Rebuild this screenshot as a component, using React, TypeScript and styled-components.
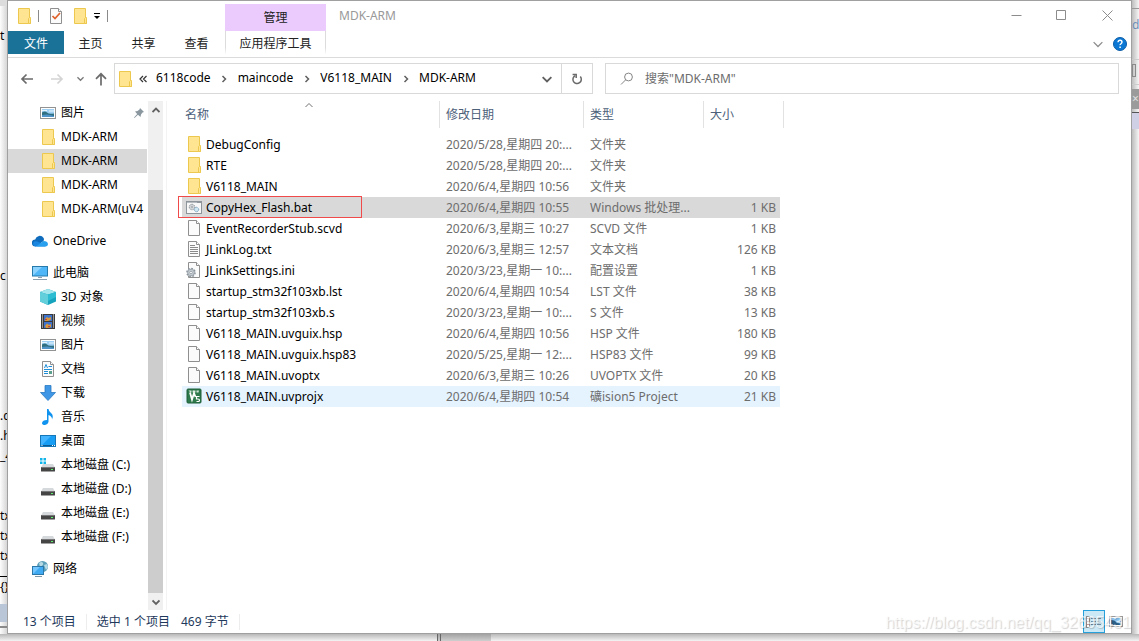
import React from 'react';
import styled, { createGlobalStyle, css } from 'styled-components';

const GlobalStyle = createGlobalStyle`
  * { box-sizing: border-box; }
  body {
    margin: 0;
    background: #fff;
    color: #000;
    font: 12px/20px "Noto Sans", "Noto Sans CJK SC", sans-serif;
  }
  button, input {
    font: inherit;
    color: inherit;
    margin: 0;
    padding: 0;
    border: 0;
    background: none;
  }
  svg { display: block; flex: none; }
`;

/* ---------- Desktop behind the window ---------- */

const Desktop = styled.div`
  display: flex;
  flex-direction: column;
  min-height: 100vh;
`;

const DesktopRow = styled.div`
  display: flex;
  flex: 1;
`;

const LeftEdge = styled.div`
  flex: none;
  width: 7px;
  overflow: hidden;
  display: flex;
  flex-direction: column;
  background: linear-gradient(90deg, #fdfdfd, #d6d6d6);
`;

const Peek = styled.span<{ $gap?: number; $chip?: boolean }>`
  flex: none;
  height: 20px;
  margin-top: ${(p) => p.$gap ?? 0}px;
  white-space: nowrap;
  ${(p) =>
    p.$chip &&
    css`
      color: #e0e0e0;
      background: #9b9b9b;
    `}
`;

const PeekBar = styled.span<{ $gap: number; $height: number; $color: string; $outline?: boolean }>`
  flex: none;
  height: ${(p) => p.$height}px;
  margin-top: ${(p) => p.$gap}px;
  margin-right: ${(p) => (p.$outline ? 3 : 0)}px;
  background: ${(p) => (p.$outline ? 'transparent' : p.$color)};
  border: ${(p) => (p.$outline ? `1px solid ${p.$color}` : '0')};
`;

const RightEdge = styled(LeftEdge)`
  background: linear-gradient(90deg, #bdbdbd, #f6f6f6);
  color: #6f8fb8;
`;

const BottomEdge = styled.div`
  flex: none;
  height: 7px;
  display: flex;
  background: linear-gradient(#b8b8b8, #f4f4f4);
`;

const BottomPane = styled.div`
  width: 54px;
  margin-left: 437px;
  border-left: 4px double #666;
  background: linear-gradient(#a2a2a2, #cfcfcf);
`;

/* ---------- Window frame ---------- */

const Window = styled.main`
  flex: 1;
  min-width: 0;
  display: flex;
  flex-direction: column;
  background: #fff;
  border: 1px solid #a0a0a0;
`;

const Ribbon = styled.header`
  display: flex;
  flex-direction: column;
  border-bottom: 1px solid #dadbdc;
`;

const TitleBar = styled.div`
  display: flex;
  height: 30px;
`;

const QuickAccess = styled.div`
  display: flex;
  align-items: center;
  gap: 6px;
  width: 217px;
  padding-left: 8px;
`;

const QuickDivider = styled.span`
  width: 1px;
  height: 12px;
  background: #8a8a8a;
`;

const IconButton = styled.button<{ $width?: number }>`
  display: flex;
  align-items: center;
  justify-content: center;
  width: ${(p) => p.$width ?? 16}px;
  min-height: 16px;
`;

const ContextGroup = styled.div`
  width: 101px;
  margin-top: 3px;
  padding-top: 4px;
  text-align: center;
  color: #222;
  background: #ebcbfd;
`;

const WindowTitle = styled.h1`
  margin: 0;
  flex: 1;
  padding: 5px 13px;
  font-size: 12px;
  font-weight: 400;
  color: #999;
`;

const WindowControls = styled.div`
  display: flex;
  padding-bottom: 2px;
`;

const TabRow = styled.nav`
  display: flex;
  height: 26px;
`;

const Tab = styled.button<{ $variant?: 'file' | 'context' }>`
  width: 53px;
  height: 23px;
  padding-top: 2px;
  color: #222;
  ${(p) =>
    p.$variant === 'file' &&
    css`
      width: 56px;
      color: #fff;
      background: #1b7299;
    `}
  ${(p) =>
    p.$variant === 'context' &&
    css`
      width: 101px;
      margin-left: 2px;
      border: solid;
      border-width: 0 1px;
      border-image: linear-gradient(#dcdcdc, #dcdcdc 70%, #fff) 1;
    `}
`;

const RibbonTools = styled.div`
  display: flex;
  align-items: center;
  gap: 7px;
  margin-left: auto;
  padding-right: 4px;
`;

/* ---------- Address row ---------- */

const AddressRow = styled.div`
  display: flex;
  padding: 5px 12px 7px 0;
`;

const NavButtons = styled.div`
  display: flex;
  align-items: center;
  width: 106px;
  padding-left: 4px;
`;

const AddressBox = styled.div`
  flex: 475 1 0;
  display: flex;
  align-items: center;
  height: 31px;
  padding-left: 2px;
  border: 1px solid #d9d9d9;
`;

const Crumbs = styled.ol`
  display: flex;
  align-items: center;
  flex: 1;
  margin: 0;
  padding: 0 0 2px 6px;
  list-style: none;
`;

const Crumb = styled.li`
  display: flex;
  align-items: center;
  white-space: nowrap;
`;

const CrumbLink = styled.a`
  color: #000;
  text-decoration: none;
`;

const CrumbArrow = styled.span`
  display: flex;
  justify-content: center;
  width: 27px;
  padding-top: 2px;
`;

const CrumbOverflow = styled(CrumbArrow)`
  justify-content: flex-start;
  width: 17px;
`;

const RefreshButton = styled(IconButton)`
  width: 31px;
  height: 29px;
  border-left: 1px solid #d9d9d9;
`;

const SearchBox = styled.label`
  flex: 498 1 0;
  display: flex;
  align-items: center;
  gap: 11px;
  height: 31px;
  margin-left: 12px;
  padding-left: 14px;
  border: 1px solid #d9d9d9;
`;

const SearchInput = styled.input`
  flex: 1;
  outline: none;
  &::placeholder { color: #6d6d6d; opacity: 1; }
`;

/* ---------- Body ---------- */

const Body = styled.div`
  flex: 1;
  display: flex;
`;

const Sidebar = styled.nav`
  flex: none;
  width: 139px;
  overflow: hidden;
`;

const TreeLink = styled.a<{ $root?: boolean; $selected?: boolean }>`
  display: flex;
  align-items: center;
  gap: 5px;
  height: 24px;
  margin-top: ${(p) => (p.$root ? 8 : 0)}px;
  padding-left: ${(p) => (p.$root ? 24 : 32)}px;
  color: #000;
  text-decoration: none;
  white-space: nowrap;
  background: ${(p) => (p.$selected ? '#d9d9d9' : 'transparent')};
`;

const PinSlot = styled.span`
  margin-left: auto;
  padding-right: 3px;
`;

const ScrollBar = styled.div`
  flex: none;
  display: flex;
  flex-direction: column;
  width: 15px;
  margin-left: 1px;
  background: #f0f0f0;
`;

const ScrollButton = styled.button`
  display: flex;
  align-items: center;
  justify-content: center;
  height: 17px;
`;

const ScrollThumb = styled.div`
  flex: 1;
  margin-top: 72px;
  background: #cdcdcd;
`;

const Content = styled.section`
  flex: 1;
  min-width: 0;
  margin-left: 3px;
  padding-left: 15px;
  border-left: 1px solid #f3f3f3;
`;

const FileTable = styled.table`
  width: 602px;
  table-layout: fixed;
  border-collapse: collapse;
`;

const HeadCell = styled.th`
  position: relative;
  padding: 0 0 6px;
  font-weight: 400;
  text-align: left;
`;

const HeadLabel = styled.div<{ $indent?: number }>`
  height: 27px;
  padding: 4px 0 0 ${(p) => p.$indent ?? 6}px;
  border-right: 1px solid #e2e2e2;
  color: #4c607a;
`;

const SortMark = styled.span`
  position: absolute;
  top: 0;
  left: 0;
  right: 4px;
  display: flex;
  justify-content: center;
`;

const FileRow = styled.tr<{ $state?: 'selected' | 'hover' }>`
  td {
    background: ${(p) =>
      p.$state === 'selected' ? '#d9d9d9' : p.$state === 'hover' ? '#e5f3ff' : 'transparent'};
  }
`;

const Cell = styled.td<{ $align?: 'right' }>`
  height: 21px;
  padding: ${(p) => (p.$align ? '0 4px 0 0' : '0 0 0 6px')};
  line-height: 21px;
  text-align: ${(p) => p.$align ?? 'left'};
  white-space: nowrap;
  color: #6d6d6d;
`;

const NameCell = styled(Cell)`
  position: relative;
  padding-left: 4px;
  color: #000;
`;

const FileName = styled.span`
  display: flex;
  align-items: center;
  gap: 4px;
  svg { margin-bottom: 1px; }
`;

const Highlight = styled.span`
  position: absolute;
  top: -1px;
  left: -4px;
  width: 184px;
  height: 22px;
  border: 1px solid #f04a4a;
`;

const StatusBar = styled.footer`
  position: relative;
  display: flex;
  align-items: center;
  height: 23px;
  padding-left: 15px;
  color: #1e395b;
`;

const StatusText = styled.span<{ $divider?: boolean }>`
  padding-right: 10px;
  margin-right: ${(p) => (p.$divider ? 10 : 0)}px;
  line-height: 16px;
  border-right: 1px solid ${(p) => (p.$divider ? '#ededed' : 'transparent')};
`;

const ViewButtons = styled.div`
  display: flex;
  align-self: stretch;
  margin-left: auto;
  padding-right: 4px;
`;

const ViewButton = styled.button<{ $active?: boolean }>`
  display: flex;
  align-items: center;
  justify-content: center;
  width: 22px;
  border: 1px solid ${(p) => (p.$active ? '#26a0da' : 'transparent')};
  background: ${(p) => (p.$active ? '#cbe8f6' : 'transparent')};
`;

const Watermark = styled.span`
  position: absolute;
  right: 0;
  top: 3px;
  font: 16px/20px "Liberation Sans", sans-serif;
  color: rgba(255, 255, 255, 0.7);
  text-shadow: 1px 1px 1px rgba(0, 0, 0, 0.18);
  pointer-events: none;
`;

/* ---------- Icons ---------- */

type ChevronProps = { dir: 'up' | 'down' | 'right'; size?: number; color?: string; weight?: number };

const Chevron = ({ dir, size = 8, color = '#606060', weight = 1.5 }: ChevronProps) => (
  <svg width={size} height={size} viewBox="0 0 8 8" fill="none" stroke={color} strokeWidth={weight}>
    <path d={dir === 'up' ? 'M.5 6 4 2.5 7.5 6' : dir === 'down' ? 'M.5 2.5 4 6 7.5 2.5' : 'M2.5 1 5.5 4 2.5 7'} />
  </svg>
);

const FolderIcon = () => (
  <svg width="16" height="16" viewBox="0 0 16 16">
    <path d="M2.5.5h11v9h1v6h-12z" fill="#ffe591" stroke="#ecc94e" />
    <path d="M12.5 15.5v-5l1-1 1 1v5z" fill="#ffe591" stroke="#ecc94e" />
  </svg>
);

const PageShape = () => (
  <>
    <path d="M2.5.5h8l3 3v12h-11z" fill="#fbfbfb" stroke="#8f8f8f" />
    <path d="M10.5.5v3h3" fill="#fff" stroke="#8f8f8f" />
  </>
);

const FileIcon = () => (
  <svg width="16" height="16" viewBox="0 0 16 16"><PageShape /></svg>
);

const TextFileIcon = () => (
  <svg width="16" height="16" viewBox="0 0 16 16">
    <PageShape />
    <path d="M4 4.5h5M4 6.5h8M4 8.5h8M4 10.5h8M4 12.5h8" stroke="#8a8a8a" />
  </svg>
);

const IniIcon = () => (
  <svg width="16" height="16" viewBox="0 0 16 16">
    <PageShape />
    <circle cx="5" cy="10.5" r="4" fill="#c9d0d6" stroke="#8b959d" strokeWidth="1.6" strokeDasharray="1.7 1.4" />
    <circle cx="5" cy="10.5" r="3.2" fill="#c9d0d6" stroke="#9aa3aa" strokeWidth=".8" />
    <circle cx="5" cy="10.5" r="1.3" fill="#fff" stroke="#8b959d" strokeWidth=".8" />
  </svg>
);

const BatIcon = () => (
  <svg width="16" height="16" viewBox="0 0 16 16">
    <rect x=".5" y="2.5" width="15" height="12" fill="#f8f8f8" stroke="#8d949a" />
    <path d="M1 3.5h14" stroke="#b6bcc2" />
    <path d="M11.5 3.5h3" stroke="#6a7075" strokeDasharray="1 1" />
    <circle cx="6" cy="8" r="2.7" fill="#e3e6e8" stroke="#7d848a" strokeDasharray="1.2 .6" />
    <circle cx="6" cy="8" r="1" fill="#fff" stroke="#7d848a" strokeWidth=".7" />
    <circle cx="10.5" cy="10.5" r="2.2" fill="#cfe6f3" stroke="#6f9ab3" strokeDasharray="1 .5" />
  </svg>
);

const KeilIcon = () => (
  <svg width="16" height="16" viewBox="0 0 16 16">
    <rect x="1" y="1" width="14" height="14" rx="1" fill="#2f7a4d" stroke="#1f5f39" />
    <path d="M2.500 2.500h3v2h-1zM6.500 2.500h3v2h-3zM10.500 2.500h2.500l-.5 2h-2z" fill="#cfe5d6" />
    <path d="M4 4.500 6 11.500 8 5 9.500 9" fill="none" stroke="#fff" strokeWidth="1.800" />
    <path d="M13.500 8.500h-3v2.500h1.500q1.500 0 1.500 1.300t-1.500 1.200h-1.500" fill="none" stroke="#fff" strokeWidth="1.200" />
  </svg>
);

const PicturesIcon = () => (
  <svg width="16" height="16" viewBox="0 0 16 16">
    <rect x=".5" y="2.500" width="15" height="11" fill="#fff" stroke="#929292" />
    <rect x="2" y="4" width="12" height="8" fill="#9fd0f3" />
    <path d="M2 7.500q3-2 5 0t7 1v3.500H2z" fill="#2f6f80" />
    <path d="M2 5.500h5M9 6h5" stroke="#e6f4fd" />
    <path d="M2 10q6-1.500 12 1v1H2z" fill="#4f93c8" />
  </svg>
);

const OneDriveIcon = () => (
  <svg width="16" height="16" viewBox="0 0 16 16">
    <path d="M3.500 13.500a3.500 3.500 0 0 1-.3-7A4.600 4.600 0 0 1 11.600 5q1 2-.6 3.500z" fill="#0f6cbd" />
    <path d="M3.500 13.500Q1 13 1 10.700q.3-3 4-2.200l2.500 1L14 13.500z" fill="#1a86e0" />
    <path d="M4 13.500 11.500 8q4 0 4.500 3-.1 2.500-3 2.500z" fill="#28a0ee" />
  </svg>
);

const ComputerIcon = () => (
  <svg width="16" height="16" viewBox="0 0 16 16">
    <rect x=".5" y="1.500" width="15" height="9.500" fill="#4fb6f7" stroke="#2579ab" />
    <path d="M1 10.500V2h9z" fill="#8bd2ff" />
    <path d="M6 12.500h4M1 14.500h14" stroke="#8aa0b0" />
  </svg>
);

const CubeIcon = () => (
  <svg width="16" height="16" viewBox="0 0 16 16">
    <path d="M8 0 16 3v9.500L8 16 0 12.500V3z" fill="#16a3bd" />
    <path d="M8 0 16 3 8 5.500 0 3z" fill="#a5e6ec" />
    <path d="M0 3 8 5.500V16L0 12.500z" fill="#62cfdb" />
    <path d="M8 5.500 16 3v5L8 12z" fill="#2dbdd2" />
  </svg>
);

const VideoIcon = () => (
  <svg width="16" height="16" viewBox="0 0 16 16">
    <path d="M1 1h14v15H1z" fill="#3b3b3b" />
    <path d="M2.500 1.500v14M13.500 1.500v14" stroke="#f2f2f2" strokeDasharray="1 1" />
    <path d="M4 2h8v6H4zM4 9h8v6H4z" fill="#3f74cc" />
    <path d="M5 6 7 4l1.500 1L11 4v2.500L8 8H5zM5 13l2-2.500L9 12l2-1v3l-3 1H6z" fill="#d9963a" />
    <path d="M5 6.500h2M8 13.500h2" stroke="#c33f3a" />
  </svg>
);

const DocumentsIcon = () => (
  <svg width="16" height="16" viewBox="0 0 16 16">
    <PageShape />
    <path d="M4.500 7 6 3.500 7.500 7M8.500 5.500H12M4 8.500h8M4 10.500h4M4 12.500h4" fill="none" stroke="#1f8ed8" />
    <rect x="9" y="10" width="3" height="3" fill="#5aa08c" />
  </svg>
);

const DownloadsIcon = () => (
  <svg width="16" height="16" viewBox="0 0 16 16">
    <path d="M5 .500h6v7h4.500L8 15.500.500 7.500H5z" fill="#3f97e6" stroke="#2a78c2" strokeWidth=".8" />
  </svg>
);

const MusicIcon = () => (
  <svg width="16" height="16" viewBox="0 0 16 16">
    <path d="M7 0h1.500q.3 2.500 2.500 4 3 2.500 1 6.500.3-3-3.500-4.500V13q-.5 2.500-3.500 3-3 0-3-2 .5-3 5-3z" fill="#0f93ef" />
  </svg>
);

const DesktopIcon = () => (
  <svg width="16" height="16" viewBox="0 0 16 16">
    <rect x=".5" y="2.500" width="15" height="11" fill="#189df5" stroke="#1577b8" />
    <path d="M1 13V3h10z" fill="#43b4ff" />
    <path d="M1 12.500h14" stroke="#0b5a92" />
    <path d="M1.500 12.500h1M12 12.500h1M14 12.500h1" stroke="#fff" />
  </svg>
);

const DriveIcon = ({ system }: { system?: boolean }) => (
  <svg width="16" height="16" viewBox="0 0 16 16">
    <path d="M3 7h10l2 3.500H1z" fill="#d6d9db" />
    <rect x="1" y="10" width="14" height="4.500" rx=".5" fill="#454545" />
    <path d="M1.500 10.500h13" stroke="#777" />
    <rect x="11" y="12" width="2" height="1" fill="#5df06c" />
    {system && <path d="M0 1h2.500v2.500H0zM3.500 1H6v2.500H3.500zM0 4.500h2.500V7H0zM3.500 4.500H6V7H3.500z" fill="#12b5ea" />}
  </svg>
);

const NetworkIcon = () => (
  <svg width="16" height="16" viewBox="0 0 16 16">
    <circle cx="10.500" cy="5.500" r="5.500" fill="#5c9fb8" />
    <path d="M7 2q3-2 4 0T8 6zM12 4l3-1 1 3-2 3z" fill="#b7dbe6" />
    <rect x=".5" y="5.500" width="11" height="8" fill="#3fa9f2" stroke="#2b78a8" />
    <path d="M1 13V6h7z" fill="#74c6ff" />
    <path d="M3 15.500h7" stroke="#7c98a8" />
  </svg>
);

const PinIcon = () => (
  <svg width="10" height="10" viewBox="0 0 10 10">
    <path d="M6 0 10 4 8.500 4.500 7 6.500 6.500 9 4 6.800.500 10 0 9.500 3.200 6 1 3.500 3.500 3 5.500 1.500z" fill="#8a979f" />
  </svg>
);

const CheckPageIcon = () => (
  <svg width="16" height="16" viewBox="0 0 16 16">
    <PageShape />
    <path d="m4.500 8 2.500 2.500L12 5" fill="none" stroke="#e0622c" strokeWidth="1.700" />
  </svg>
);

const CustomizeIcon = () => (
  <svg width="8" height="8" viewBox="0 0 8 8">
    <path d="M1 1.500h6" stroke="#000" />
    <path d="M1 4h6L4 7z" fill="#000" />
  </svg>
);

const Arrow = ({ kind, color }: { kind: 'left' | 'right' | 'up'; color: string }) => (
  <svg width="14" height="14" viewBox="0 0 14 14" fill="none" stroke={color} strokeWidth="1.700">
    <path
      d={
        kind === 'left'
          ? 'M13 7H2M6.500 2.500 2 7l4.500 4.500'
          : kind === 'right'
            ? 'M1 7h11M7.500 2.500 12 7l-4.500 4.500'
            : 'M7 13.500V2M2 6.800 7 1.800l5 5'
      }
    />
  </svg>
);

const WindowIcon = ({ kind }: { kind: 'min' | 'max' | 'close' }) => (
  <svg width="11" height="11" viewBox="0 0 11 11" fill="none" stroke="#8c8c8c">
    <path
      d={
        kind === 'min'
          ? 'M.500 5.500h10'
          : kind === 'max'
            ? 'M.500.500h9v9H.500z'
            : 'M.500.500l10 10M10.500.500l-10 10'
      }
    />
  </svg>
);

const HelpIcon = () => (
  <svg width="14" height="14" viewBox="0 0 14 14">
    <circle cx="7" cy="7" r="6.500" fill="#0d78d4" stroke="#0a5ca6" />
    <path d="M5 5.300q.2-2 2.100-2T9 5.100Q9 6 8 6.700t-.9 1.500" fill="none" stroke="#fff" strokeWidth="1.400" />
    <path d="M7.100 9.500v1.500" stroke="#fff" strokeWidth="1.500" />
  </svg>
);

const RefreshIcon = () => (
  <svg width="12" height="12" viewBox="0 0 12 12" fill="none" stroke="#6a6a6a" strokeWidth="1.500">
    <path d="M9.300 3.600A4.200 4.200 0 1 1 4.200 2.600" />
    <path d="M5.200 5V1.500H1.600" />
  </svg>
);

const SearchIcon = () => (
  <svg width="14" height="14" viewBox="0 0 14 14" fill="none" stroke="#858585">
    <circle cx="8.500" cy="5" r="3.900" />
    <path d="M5.700 7.800 1 12.500" />
  </svg>
);

const DoubleLeft = () => (
  <svg width="8" height="8" viewBox="0 0 8 8" fill="none" stroke="#333" strokeWidth="1.200">
    <path d="M4 1 1 4l3 3M7.500 1l-3 3 3 3" />
  </svg>
);

const DetailsViewIcon = () => (
  <svg width="16" height="12" viewBox="0 0 16 12">
    <rect x=".5" y=".5" width="3" height="11" fill="#fff" stroke="#8d8d8d" />
    <path d="M2 2v9" stroke="#a23c34" strokeDasharray="1 2" />
    <path d="M5 2.500h5M11 2.500h4M5 5.500h5M11 5.500h4M5 8.500h5M11 8.500h4" stroke="#6f8ba0" />
  </svg>
);

const LargeViewIcon = () => (
  <svg width="14" height="12" viewBox="0 0 14 12">
    <rect x=".5" y=".5" width="13" height="10" fill="#fff" stroke="#9a9a9a" />
    <rect x="2" y="2" width="10" height="7" fill="#8cc4f0" />
    <path d="M2 4q4 0 5 2t5 1v2H2z" fill="#2b5f86" />
  </svg>
);

/* ---------- Data ---------- */

type TreeItem = { label: string; icon: React.ReactNode; root?: boolean; selected?: boolean; pinned?: boolean };

const tree: TreeItem[] = [
  { label: '图片', icon: <PicturesIcon />, pinned: true },
  { label: 'MDK-ARM', icon: <FolderIcon /> },
  { label: 'MDK-ARM', icon: <FolderIcon />, selected: true },
  { label: 'MDK-ARM', icon: <FolderIcon /> },
  { label: 'MDK-ARM(uV4', icon: <FolderIcon /> },
  { label: 'OneDrive', icon: <OneDriveIcon />, root: true },
  { label: '此电脑', icon: <ComputerIcon />, root: true },
  { label: '3D 对象', icon: <CubeIcon /> },
  { label: '视频', icon: <VideoIcon /> },
  { label: '图片', icon: <PicturesIcon /> },
  { label: '文档', icon: <DocumentsIcon /> },
  { label: '下载', icon: <DownloadsIcon /> },
  { label: '音乐', icon: <MusicIcon /> },
  { label: '桌面', icon: <DesktopIcon /> },
  { label: '本地磁盘 (C:)', icon: <DriveIcon system /> },
  { label: '本地磁盘 (D:)', icon: <DriveIcon /> },
  { label: '本地磁盘 (E:)', icon: <DriveIcon /> },
  { label: '本地磁盘 (F:)', icon: <DriveIcon /> },
  { label: '网络', icon: <NetworkIcon />, root: true },
];

type FileItem = {
  name: string;
  icon: React.ReactNode;
  date: string;
  type: string;
  size?: string;
  state?: 'selected' | 'hover';
};

const files: FileItem[] = [
  { name: 'DebugConfig', icon: <FolderIcon />, date: '2020/5/28,星期四 20:...', type: '文件夹' },
  { name: 'RTE', icon: <FolderIcon />, date: '2020/5/28,星期四 20:...', type: '文件夹' },
  { name: 'V6118_MAIN', icon: <FolderIcon />, date: '2020/6/4,星期四 10:56', type: '文件夹' },
  { name: 'CopyHex_Flash.bat', icon: <BatIcon />, date: '2020/6/4,星期四 10:55', type: 'Windows 批处理...', size: '1 KB', state: 'selected' },
  { name: 'EventRecorderStub.scvd', icon: <FileIcon />, date: '2020/6/3,星期三 10:27', type: 'SCVD 文件', size: '1 KB' },
  { name: 'JLinkLog.txt', icon: <TextFileIcon />, date: '2020/6/3,星期三 12:57', type: '文本文档', size: '126 KB' },
  { name: 'JLinkSettings.ini', icon: <IniIcon />, date: '2020/3/23,星期一 10:...', type: '配置设置', size: '1 KB' },
  { name: 'startup_stm32f103xb.lst', icon: <FileIcon />, date: '2020/6/4,星期四 10:54', type: 'LST 文件', size: '38 KB' },
  { name: 'startup_stm32f103xb.s', icon: <FileIcon />, date: '2020/3/23,星期一 10:...', type: 'S 文件', size: '13 KB' },
  { name: 'V6118_MAIN.uvguix.hsp', icon: <FileIcon />, date: '2020/6/4,星期四 10:56', type: 'HSP 文件', size: '180 KB' },
  { name: 'V6118_MAIN.uvguix.hsp83', icon: <FileIcon />, date: '2020/5/25,星期一 12:...', type: 'HSP83 文件', size: '99 KB' },
  { name: 'V6118_MAIN.uvoptx', icon: <FileIcon />, date: '2020/6/3,星期三 10:26', type: 'UVOPTX 文件', size: '20 KB' },
  { name: 'V6118_MAIN.uvprojx', icon: <KeilIcon />, date: '2020/6/4,星期四 10:54', type: '礦ision5 Project', size: '21 KB', state: 'hover' },
];

const crumbs = ['6118code', 'maincode', 'V6118_MAIN', 'MDK-ARM'];

/* ---------- Page ---------- */

export default function App() {
  return (
    <Desktop>
      <GlobalStyle />
      <DesktopRow>
        <LeftEdge>
          <PeekBar $gap={0} $height={6} $color="#dcdcdc" />
          <Peek $gap={20}>t</Peek>
          <Peek $gap={220}>c</Peek>
          <Peek $gap={120}>.c</Peek>
          <Peek>.h</Peek>
          <Peek>_4</Peek>
          <Peek $gap={40}>tx</Peek>
          <Peek>tx</Peek>
          <Peek>tx</Peek>
          <PeekBar $gap={10} $height={1} $color="#000" />
          <Peek>{'{}'}</Peek>
          <PeekBar $gap={7} $height={18} $color="#b9c6d8" />
          <PeekBar $gap={4} $height={2} $color="#8a8a8a" />
        </LeftEdge>

        <Window>
          <Ribbon>
            <TitleBar>
              <QuickAccess>
                <IconButton aria-label="文件夹"><FolderIcon /></IconButton>
                <QuickDivider />
                <IconButton $width={22} aria-label="属性"><CheckPageIcon /></IconButton>
                <IconButton $width={14} aria-label="新建文件夹"><FolderIcon /></IconButton>
                <IconButton $width={8} aria-label="自定义"><CustomizeIcon /></IconButton>
                <QuickDivider />
              </QuickAccess>
              <ContextGroup>管理</ContextGroup>
              <WindowTitle>MDK-ARM</WindowTitle>
              <WindowControls>
                <IconButton $width={46} aria-label="最小化"><WindowIcon kind="min" /></IconButton>
                <IconButton $width={45} aria-label="最大化"><WindowIcon kind="max" /></IconButton>
                <IconButton $width={47} aria-label="关闭"><WindowIcon kind="close" /></IconButton>
              </WindowControls>
            </TitleBar>
            <TabRow>
              <Tab $variant="file">文件</Tab>
              <Tab>主页</Tab>
              <Tab>共享</Tab>
              <Tab>查看</Tab>
              <Tab $variant="context">应用程序工具</Tab>
              <RibbonTools>
                <IconButton aria-label="展开功能区"><Chevron dir="down" size={10} color="#8c8c8c" weight={1} /></IconButton>
                <IconButton $width={14} aria-label="帮助"><HelpIcon /></IconButton>
              </RibbonTools>
            </TabRow>
          </Ribbon>

          <AddressRow>
            <NavButtons>
              <IconButton $width={30} aria-label="后退"><Arrow kind="left" color="#6b6b6b" /></IconButton>
              <IconButton $width={30} aria-label="前进"><Arrow kind="right" color="#d4d4d4" /></IconButton>
              <IconButton $width={16} aria-label="最近位置"><Chevron dir="down" size={7} color="#7a7a7a" /></IconButton>
              <IconButton $width={26} aria-label="上移"><Arrow kind="up" color="#6b6b6b" /></IconButton>
            </NavButtons>
            <AddressBox>
              <FolderIcon />
              <Crumbs>
                {crumbs.map((c, i) => (
                  <Crumb key={c}>
                    {i > 0 ? (
                      <CrumbArrow><Chevron dir="right" /></CrumbArrow>
                    ) : (
                      <CrumbOverflow><DoubleLeft /></CrumbOverflow>
                    )}
                    <CrumbLink href="#">{c}</CrumbLink>
                  </Crumb>
                ))}
              </Crumbs>
              <IconButton $width={28} aria-label="历史记录"><Chevron dir="down" size={10} /></IconButton>
              <RefreshButton aria-label="刷新"><RefreshIcon /></RefreshButton>
            </AddressBox>
            <SearchBox>
              <SearchIcon />
              <SearchInput type="text" aria-label="搜索" placeholder={'搜索"MDK-ARM"'} />
            </SearchBox>
          </AddressRow>

          <Body>
            <Sidebar>
              {tree.map((item, i) => (
                <TreeLink key={i} href="#" $root={item.root} $selected={item.selected}>
                  {item.icon}
                  {item.label}
                  {item.pinned && <PinSlot><PinIcon /></PinSlot>}
                </TreeLink>
              ))}
            </Sidebar>
            <ScrollBar>
              <ScrollButton aria-label="向上滚动"><Chevron dir="up" weight={1.8} /></ScrollButton>
              <ScrollThumb />
              <ScrollButton aria-label="向下滚动"><Chevron dir="down" weight={1.8} /></ScrollButton>
            </ScrollBar>
            <Content>
              <FileTable>
                <colgroup>
                  <col width="258" />
                  <col width="144" />
                  <col width="120" />
                  <col width="76" />
                  <col width="4" />
                </colgroup>
                <thead>
                  <tr>
                    <HeadCell>
                      <SortMark><Chevron dir="up" color="#707070" weight={1} /></SortMark>
                      <HeadLabel $indent={3}>名称</HeadLabel>
                    </HeadCell>
                    <HeadCell><HeadLabel>修改日期</HeadLabel></HeadCell>
                    <HeadCell><HeadLabel>类型</HeadLabel></HeadCell>
                    <HeadCell colSpan={2}><HeadLabel>大小</HeadLabel></HeadCell>
                  </tr>
                </thead>
                <tbody>
                  {files.map((f) => (
                    <FileRow key={f.name} $state={f.state}>
                      <NameCell>
                        <FileName>{f.icon}{f.name}</FileName>
                        {f.state === 'selected' && <Highlight />}
                      </NameCell>
                      <Cell>{f.date}</Cell>
                      <Cell>{f.type}</Cell>
                      <Cell $align="right">{f.size}</Cell>
                    </FileRow>
                  ))}
                </tbody>
              </FileTable>
            </Content>
          </Body>

          <StatusBar>
            <StatusText $divider>13 个项目</StatusText>
            <StatusText>选中 1 个项目</StatusText>
            <StatusText $divider>469 字节</StatusText>
            <ViewButtons>
              <ViewButton $active aria-label="详细信息"><DetailsViewIcon /></ViewButton>
              <ViewButton aria-label="大图标"><LargeViewIcon /></ViewButton>
            </ViewButtons>
            <Watermark>https://blog.csdn.net/qq_32695431</Watermark>
          </StatusBar>
        </Window>

        <RightEdge>
          <PeekBar $gap={8} $height={1} $color="#999" />
          <Peek $gap={6}>d</Peek>
          <PeekBar $gap={24} $height={1} $color="#ccc" />
          <PeekBar $gap={4} $height={13} $color="#8a8a8a" $outline />
          <PeekBar $gap={7} $height={1} $color="#ccc" />
          <Peek $gap={4} $chip>×</Peek>
          <PeekBar $gap={3} $height={1} $color="#555" />
          <PeekBar $gap={0} $height={16} $color="#cfcfe6" />
        </RightEdge>
      </DesktopRow>
      <BottomEdge><BottomPane /></BottomEdge>
    </Desktop>
  );
}
